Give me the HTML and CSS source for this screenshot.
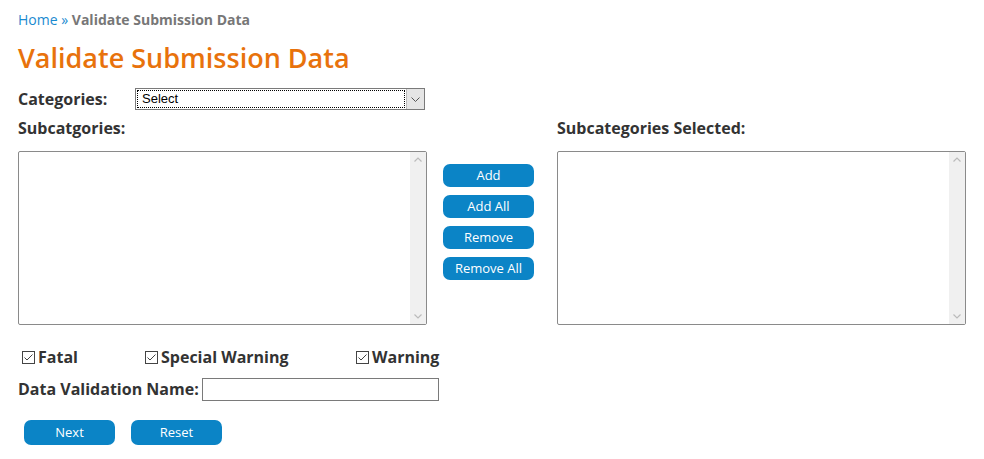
FILE: index.html
```html
<!DOCTYPE html>
<html>
<head>
<meta charset="utf-8">
<link rel="stylesheet" href="styles.css">
</head>
<body>
<div class="page">
  <div class="crumb"><a class="home">Home</a> <span class="sep">»</span> <b>Validate Submission Data</b></div>
  <h1 class="title">Validate Submission Data</h1>
  <div class="cat-row">
    <span class="lbl cat-lbl">Categories:</span>
    <div class="select">
      <div class="select-val"><span>Select</span></div>
      <div class="select-btn"><svg width="9" height="5" viewBox="0 0 9 5"><path d="M0.5 0.5 L4.5 4.5 L8.5 0.5" fill="none" stroke="#555" stroke-width="1"/></svg></div>
    </div>
  </div>
  <div class="lists">
    <div class="col">
      <div class="lbl col-lbl">Subcatgories:</div>
      <div class="listbox">
        <div class="lb-body"></div>
        <div class="sbar">
          <svg width="8" height="5" viewBox="0 0 8 5"><path d="M0.5 4.5 L4 1 L7.5 4.5" fill="none" stroke="#bbb" stroke-width="1.2"/></svg>
          <svg width="8" height="5" viewBox="0 0 8 5"><path d="M0.5 0.5 L4 4 L7.5 0.5" fill="none" stroke="#bbb" stroke-width="1.2"/></svg>
        </div>
      </div>
    </div>
    <div class="mid">
      <button class="btn">Add</button>
      <button class="btn">Add All</button>
      <button class="btn">Remove</button>
      <button class="btn">Remove All</button>
    </div>
    <div class="col">
      <div class="lbl col-lbl">Subcategories Selected:</div>
      <div class="listbox">
        <div class="lb-body"></div>
        <div class="sbar">
          <svg width="8" height="5" viewBox="0 0 8 5"><path d="M0.5 4.5 L4 1 L7.5 4.5" fill="none" stroke="#bbb" stroke-width="1.2"/></svg>
          <svg width="8" height="5" viewBox="0 0 8 5"><path d="M0.5 0.5 L4 4 L7.5 0.5" fill="none" stroke="#bbb" stroke-width="1.2"/></svg>
        </div>
      </div>
    </div>
  </div>
  <div class="checks">
    <label class="chk c1"><svg class="box" width="13" height="13" viewBox="0 0 13 13"><rect x="0.5" y="0.5" width="12" height="12" fill="#fff" stroke="#444"/><path d="M2.5 6.5 L5 9 L10.5 3.5" fill="none" stroke="#444" stroke-width="1"/></svg><span>Fatal</span></label>
    <label class="chk c2"><svg class="box" width="13" height="13" viewBox="0 0 13 13"><rect x="0.5" y="0.5" width="12" height="12" fill="#fff" stroke="#444"/><path d="M2.5 6.5 L5 9 L10.5 3.5" fill="none" stroke="#444" stroke-width="1"/></svg><span>Special Warning</span></label>
    <label class="chk c3"><svg class="box" width="13" height="13" viewBox="0 0 13 13"><rect x="0.5" y="0.5" width="12" height="12" fill="#fff" stroke="#444"/><path d="M2.5 6.5 L5 9 L10.5 3.5" fill="none" stroke="#444" stroke-width="1"/></svg><span>Warning</span></label>
  </div>
  <div class="name-row">
    <span class="lbl">Data Validation Name:</span>
    <div class="txt"></div>
  </div>
  <div class="actions">
    <button class="btn btn-wide">Next</button>
    <button class="btn btn-wide">Reset</button>
  </div>
</div>
</body>
</html>
```
FILE: styles.css
```css
html, body { margin: 0; padding: 0; background: #fff; }
body { font-family: "Open Sans", "Noto Sans", sans-serif; color: #333; }
.page { padding: 10px 0 0 18px; width: 960px; }
.crumb { font-size: 14px; line-height: 20px; color: #777; }
.crumb .home { color: #1a8ad0; }
.crumb .sep { color: #1a8ad0; }
.crumb b { font-weight: 700; color: #777; }
.title { margin: 10px 0 0 0; font-size: 27px; line-height: 36px; font-weight: 600; color: #e8720c; }
.lbl { font-size: 16px; font-weight: 700; color: #333; }
.cat-row { display: flex; align-items: center; margin-top: 12px; height: 22px; }
.cat-lbl { width: 117px; }
.select { display: flex; width: 288px; height: 20px; border: 1px solid #7a7a7a; background: #fff; }
.select-val { flex: 1; padding: 1px; }
.select-val span { display: block; height: 16px; border: 1px dotted #000; font-family: "Liberation Sans", Arial, sans-serif; font-size: 13px; line-height: 16px; padding-left: 4px; color: #000; }
.select-btn { width: 17px; background: #e5e5e5; border-left: 1px solid #bbb; display: flex; align-items: center; justify-content: center; }
.lists { display: flex; margin-top: 8px; }
.col { width: 409px; }
.col-lbl { line-height: 20px; }
.listbox { display: flex; margin-top: 13px; height: 172px; border: 1px solid #8a8a8a; border-radius: 2px; }
.lb-body { flex: 1; }
.sbar { width: 16px; background: #f0f0f0; display: flex; flex-direction: column; justify-content: space-between; align-items: center; padding: 5px 0; }
.mid { width: 130px; display: flex; flex-direction: column; gap: 8px; padding: 46px 0 0 16px; box-sizing: border-box; }
.btn { width: 91px; height: 23px; border: none; border-radius: 7px; background: #0b84c6; color: #fff; font-family: "Open Sans", "Noto Sans", sans-serif; font-size: 13px; padding: 0; line-height: 23px; }
.checks { position: relative; height: 24px; margin-top: 20px; }
.chk { position: absolute; top: 0; display: flex; align-items: center; gap: 3px; font-size: 16px; font-weight: 700; color: #333; line-height: 24px; }
.c1 { left: 4px; }
.c2 { left: 127px; }
.c3 { left: 338px; }
.name-row { display: flex; align-items: center; margin-top: 8px; height: 24px; gap: 3px; }
.txt { width: 235px; height: 21px; border: 1px solid #7a7a7a; background: #fff; }
.actions { display: flex; gap: 16px; margin: 19px 0 0 6px; }
.btn-wide { height: 25px; line-height: 25px; }
```
